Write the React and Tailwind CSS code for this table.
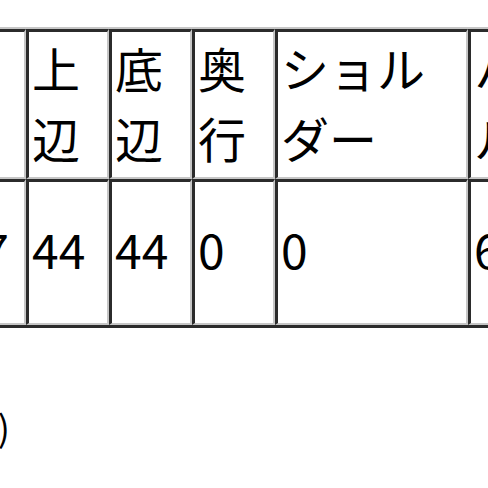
const headCell =
  'align-top text-left font-normal px-[3px] pt-0 pb-[5px] leading-[70px] border-t-[3px] border-l-[3px] border-b-2 border-r-2 border-t-[#2b2b2b] border-l-[#2b2b2b] border-b-[#c6c6c6] border-r-[#c6c6c6]'
const bodyCell =
  'align-middle text-left px-[3px] pt-0 pb-[8px] leading-[69px] h-[146px] border-t-[3px] border-l-[3px] border-b-2 border-r-2 border-t-[#2b2b2b] border-l-[#2b2b2b] border-b-[#c6c6c6] border-r-[#c6c6c6]'

const columns = [
  { label: '高さ', value: '127', width: 'w-[103px]' },
  { label: '上辺', value: '44', width: 'w-[83px]' },
  { label: '底辺', value: '44', width: 'w-[83px]' },
  { label: '奥行', value: '0', width: 'w-[83px]' },
  { label: 'ショルダー', value: '0', width: 'w-[193px]' },
  { label: 'ハンドル', value: '60', width: 'w-[193px]' },
]

export default function App() {
  return (
    <div className="w-[488px] h-[488px] overflow-hidden bg-white text-black font-['Noto_Sans_CJK_JP','Noto_Sans',sans-serif]">
      <div className="-ml-[79px] w-[900px] pt-[27px]">
        <table className="table-fixed border-separate border-spacing-0 w-[743px] text-[48px] border-t-2 border-l-2 border-b-[3px] border-r-[3px] border-t-[#c6c6c6] border-l-[#c6c6c6] border-b-[#2b2b2b] border-r-[#2b2b2b]">
          <thead>
            <tr>
              {columns.map((c) => (
                <th key={c.label} className={`${headCell} ${c.width}`}>
                  {c.label}
                </th>
              ))}
            </tr>
          </thead>
          <tbody>
            <tr>
              {columns.map((c) => (
                <td key={c.label} className={bodyCell}>
                  {c.value}
                </td>
              ))}
            </tr>
          </tbody>
        </table>

        {/* unit note below the table */}
        <div className="mt-[71px] w-[89px] flex justify-end whitespace-nowrap text-[36px] leading-[54px]">
          <span>(cm)</span>
        </div>
      </div>
    </div>
  )
}
